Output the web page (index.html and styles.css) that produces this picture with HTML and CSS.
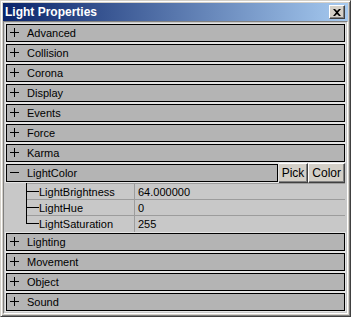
FILE: index.html
```html
<!DOCTYPE html>
<html lang="en">
<head>
    <meta charset="UTF-8">
    <title>Light Properties</title>
    <link rel="stylesheet" href="styles.css">
</head>
<body>
    <div class="window">
        <div class="titlebar">
            <span class="title">Light Properties</span>
            <span class="close">
                <svg width="8" height="7" viewBox="0 0 8 7"><path d="M0 0h2l2 2 2-2h2L5 3.5 8 7H6L4 5 2 7H0l3-3.5z" fill="#000"/></svg>
            </span>
        </div>
        <div class="panel">
            <div class="group"><span class="toggle plus"></span>Advanced</div>
            <div class="group"><span class="toggle plus"></span>Collision</div>
            <div class="group"><span class="toggle plus"></span>Corona</div>
            <div class="group"><span class="toggle plus"></span>Display</div>
            <div class="group"><span class="toggle plus"></span>Events</div>
            <div class="group"><span class="toggle plus"></span>Force</div>
            <div class="group"><span class="toggle plus"></span>Karma</div>
            <div class="group-open">
                <div class="group"><span class="toggle"></span>LightColor</div>
                <button class="btn">Pick</button>
                <button class="btn">Color</button>
            </div>
            <div class="props">
                <div class="prop">
                    <span class="branch"></span>
                    <span class="name">LightBrightness</span>
                    <span class="value">64.000000</span>
                </div>
                <div class="prop">
                    <span class="branch"></span>
                    <span class="name">LightHue</span>
                    <span class="value">0</span>
                </div>
                <div class="prop last">
                    <span class="branch"></span>
                    <span class="name">LightSaturation</span>
                    <span class="value">255</span>
                </div>
            </div>
            <div class="group"><span class="toggle plus"></span>Lighting</div>
            <div class="group"><span class="toggle plus"></span>Movement</div>
            <div class="group"><span class="toggle plus"></span>Object</div>
            <div class="group"><span class="toggle plus"></span>Sound</div>
        </div>
    </div>
</body>
</html>
```

FILE: styles.css
```css
body {
    margin: 0;
    background: #d4d0c8;
    font-family: "Liberation Sans", Arial, sans-serif;
    font-size: 11px;
    color: #000;
}

.window {
    box-sizing: border-box;
    width: 351px;
    height: 317px;
    padding: 1px;
    border: 1px solid;
    border-color: #d4d0c8 #404040 #404040 #d4d0c8;
    box-shadow: inset 1px 1px 0 #fff, inset -1px -1px 0 #808080;
    display: flex;
    flex-direction: column;
}

.titlebar {
    height: 18px;
    margin: 1px 1px 0 1px;
    background: linear-gradient(to right, #0a246a, #a6caf0);
    display: flex;
    align-items: center;
    justify-content: space-between;
    padding: 0 3px 0 2px;
}

.title {
    color: #fff;
    font-weight: bold;
    font-size: 12px;
}

.close {
    box-sizing: border-box;
    width: 16px;
    height: 14px;
    background: #d4d0c8;
    border: 1px solid;
    border-color: #fff #404040 #404040 #fff;
    box-shadow: inset -1px -1px 0 #808080;
    display: flex;
    align-items: center;
    justify-content: center;
}

.panel {
    flex: 1;
    margin: 0 1px 1px 1px;
    padding: 0 2px;
    background: #c8c8c8;
    border: 1px solid;
    border-color: #808080 #fff #fff #808080;
}

.group {
    box-sizing: border-box;
    height: 18px;
    margin: 2px 0;
    border: 1px solid #000;
    box-shadow: 0 0 0 1px #e4e4e4;
    background: #b4b4b4;
    display: flex;
    align-items: center;
    padding-left: 20px;
    position: relative;
}

.toggle {
    position: absolute;
    left: 3px;
    top: 3px;
    width: 9px;
    height: 9px;
}

.toggle::before,
.toggle.plus::after {
    content: "";
    position: absolute;
    background: #000;
}

.toggle::before {
    left: 0;
    top: 4px;
    width: 9px;
    height: 1px;
}

.toggle.plus::after {
    left: 4px;
    top: 0;
    width: 1px;
    height: 9px;
}

.group-open {
    display: flex;
    height: 20px;
    margin-top: -1px;
}

.group-open .group {
    flex: 1;
    margin: 1px 0;
}

.btn {
    box-sizing: border-box;
    height: 20px;
    margin: 0;
    padding: 0 3px;
    background: #d4d0c8;
    border: 1px solid;
    border-color: #fff #404040 #404040 #fff;
    box-shadow: inset -1px -1px 0 #808080;
    font-family: "Liberation Sans", Arial, sans-serif;
    font-size: 12px;
    color: #000;
}

.props {
    margin: 0 0 -1px 20px;
    border-top: 1px solid #9c9c9c;
}

.prop {
    display: flex;
    height: 16px;
    align-items: center;
    border-bottom: 1px solid #9c9c9c;
    box-sizing: border-box;
    position: relative;
}

.prop.last {
    border-bottom: none;
}

.branch {
    width: 13px;
    height: 16px;
    flex: none;
    position: relative;
}

.branch::before {
    content: "";
    position: absolute;
    left: 0;
    top: -1px;
    height: 17px;
    width: 1px;
    background: #000;
}

.prop.last .branch::before {
    height: 9px;
}

.branch::after {
    content: "";
    position: absolute;
    left: 0;
    top: 7px;
    width: 13px;
    height: 1px;
    background: #000;
}

.name {
    width: 95px;
    height: 16px;
    line-height: 16px;
    border-right: 1px solid #9c9c9c;
    flex: none;
}

.value {
    padding-left: 3px;
}
```
